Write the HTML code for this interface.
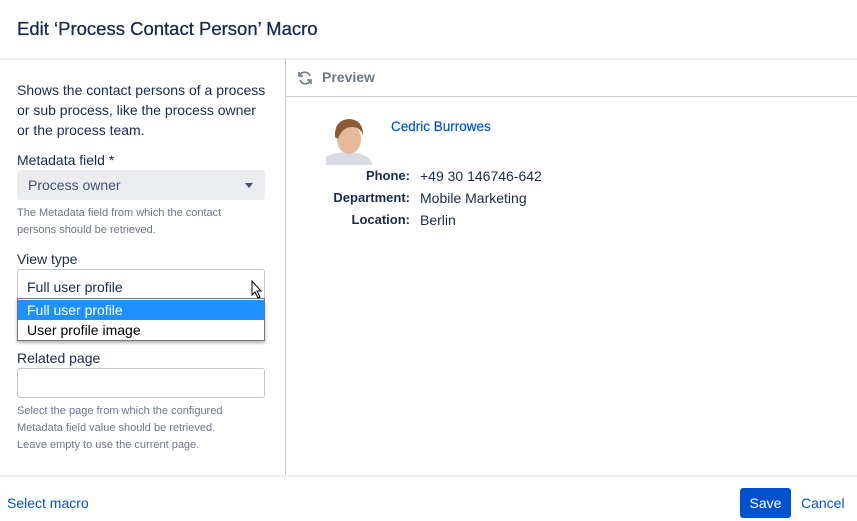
<!DOCTYPE html>
<html><head><meta charset="utf-8"><style>
*{box-sizing:border-box;margin:0;padding:0}
body{width:857px;height:521px;overflow:hidden;background:#fff;font-family:"Liberation Sans",sans-serif;color:#172b4d;position:relative}
.a{position:absolute}
.t{font-size:14px;line-height:20px}
.h{font-size:11px;line-height:17px;color:#6b778c}
</style></head><body>
<div class="a" style="left:17px;top:18px;font-size:18.5px;color:#172b4d;-webkit-text-stroke:0.3px #172b4d">Edit ‘Process Contact Person’ Macro</div>
<div class="a" style="left:0;top:58px;width:857px;height:2px;background:#ebecf0"></div>
<div class="a" style="left:285px;top:60px;width:1px;height:416px;background:#ccc"></div>
<div class="a" style="left:0;top:475px;width:857px;height:2px;background:#ebecf0"></div>

<div class="a t" style="left:17px;top:80px;width:250px;color:#172b4d">Shows the contact persons of a process or sub process, like the process owner or the process team.</div>
<div class="a t" style="left:17px;top:150px">Metadata field *</div>
<div class="a" style="left:17px;top:170px;width:248px;height:30px;background:#ebecf0;border-radius:3px"></div>
<div class="a t" style="left:28px;top:175px;color:#42526e">Process owner</div>
<div class="a" style="left:245px;top:183px;width:0;height:0;border-left:4px solid transparent;border-right:4px solid transparent;border-top:5px solid #42526e"></div>
<div class="a h" style="left:17px;top:205px;width:232px">The Metadata field from which the contact persons should be retrieved.</div>
<div class="a t" style="left:17px;top:249px">View type</div>
<div class="a" style="left:17px;top:269px;width:248px;height:32px;border:1px solid #c1c7d0;border-radius:3px"></div>
<div class="a t" style="left:27px;top:277px">Full user profile</div>
<div class="a" style="left:17px;top:298px;width:248px;height:43px;background:#fff;border:1px solid #777;box-shadow:0 2px 3px rgba(0,0,0,.3)"></div>
<div class="a t" style="left:18px;top:300px;width:246px;height:20px;background:#1e90ff;color:#fff;padding-left:9px">Full user profile</div>
<div class="a t" style="left:27px;top:320px;color:#000">User profile image</div>
<svg class="a" style="left:250px;top:280px" width="16" height="20" viewBox="0 0 16 20"><path d="M2 1 L2 15 L5 12 L8 18 L10 17 L7 11 L11 11 Z" fill="#fff" stroke="#000" stroke-width="1"/></svg>

<div class="a t" style="left:17px;top:348px">Related page</div>
<div class="a" style="left:17px;top:368px;width:248px;height:30px;border:1px solid #c1c7d0;border-radius:3px"></div>
<div class="a h" style="left:17px;top:403px;width:226px">Select the page from which the configured Metadata field value should be retrieved. Leave empty to use the current page.</div>

<svg class="a" style="left:297px;top:70px" width="16" height="16" viewBox="0 0 16 16" fill="none" stroke="#6b778c" stroke-width="1.6"><path d="M13 6 A5.5 5.5 0 0 0 3 5"/><path d="M3 10 A5.5 5.5 0 0 0 13 11"/><path d="M2 2 V6 H6"/><path d="M14 14 V10 H10"/></svg>
<div class="a" style="left:322px;top:69px;font-size:14px;font-weight:bold;color:#6b778c">Preview</div>
<div class="a" style="left:286px;top:96px;width:571px;height:1px;background:#ccc"></div>

<svg class="a" style="left:326px;top:117px" width="47" height="48" viewBox="0 0 47 48"><rect width="47" height="48" fill="#fff"/><path d="M0 48 L0 40 Q10 34 22 36 Q36 35 44 42 L47 48Z" fill="#d9dbe3"/><ellipse cx="23" cy="22" rx="12" ry="15" fill="#e8b89a"/><path d="M9 20 Q8 4 22 2 Q37 2 37 18 Q34 10 26 10 Q16 10 12 22Z" fill="#8a5a34"/></svg>
<div class="a" style="left:391px;top:119px;font-size:13.5px;color:#0052cc;-webkit-text-stroke:0.2px #0052cc">Cedric Burrowes</div>
<div class="a" style="left:290px;top:165px;width:120px;text-align:right;font-size:13px;font-weight:bold;line-height:22px">Phone:<br>Department:<br>Location:</div>
<div class="a" style="left:420px;top:165px;font-size:14px;line-height:22px;color:#172b4d">+49 30 146746-642<br>Mobile Marketing<br>Berlin</div>

<div class="a t" style="left:7px;top:493px;color:#0052cc">Select macro</div>
<div class="a" style="left:740px;top:488px;width:51px;height:30px;background:#0052cc;border-radius:3px;color:#fff;font-size:14px;line-height:30px;text-align:center">Save</div>
<div class="a t" style="left:801px;top:493px;color:#0052cc">Cancel</div>
</body></html>
